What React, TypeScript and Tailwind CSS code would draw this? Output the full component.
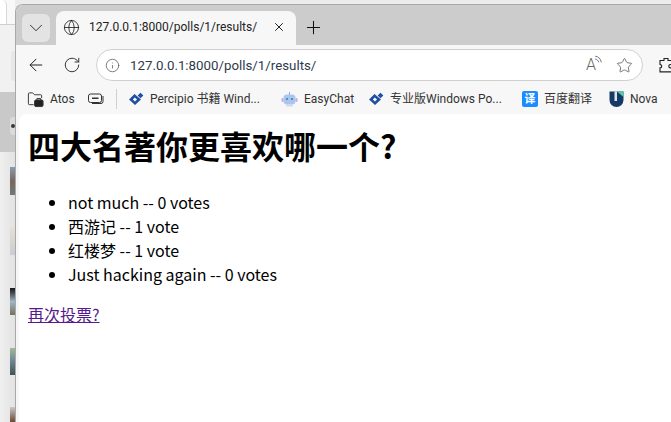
import { ChevronDown, X, Plus, ArrowLeft, RotateCw, Info, Star, Globe } from 'lucide-react';

function Bookmark({ icon, label, width }: { icon: React.ReactNode; label: string; width: string }) {
  return (
    <div className={`flex shrink-0 items-center gap-[6px] ${width}`}>
      {icon}
      <span className="whitespace-nowrap text-[12px] leading-[16px] text-[#333]">{label}</span>
    </div>
  );
}

function Diamond() {
  return (
    <svg width="16" height="16" viewBox="0 0 16 16" className="shrink-0">
      <path d="M6.5 3 L13 8.5 L7 14 L1 8.5 Z M6.8 6.5 L4.8 8.5 L7 10.5 L9 8.5 Z" fill="#1f4fa3" fillRule="evenodd" />
      <rect x="10.5" y="2.5" width="4" height="4" transform="rotate(45 12.5 4.5)" fill="#1f4fa3" />
    </svg>
  );
}

export default function App() {
  return (
    <div className='flex h-[422px] w-[671px] overflow-hidden bg-[#ececec] font-["Roboto","Noto_Sans_CJK_SC",sans-serif]'>
      {/* desktop behind the window */}
      <div className="flex w-[15px] shrink-0 flex-col">
        <div className="h-[25px] shrink-0 border-b border-[#cfcfcf] bg-[#f8f8f8]">
          <div className="h-[24px] w-[7px] rounded-tr-[5px] border-r border-[#d8d8d8] bg-white" />
        </div>
        <div className="h-[67px] shrink-0 bg-[#f1f1f1] pt-[26px] pl-[11px]">
          <div className="h-[30px] w-[4px] rounded-l-[3px] bg-[#e7e7e7]" />
        </div>
        <div className="h-[60px] shrink-0 bg-[#c9c9c9] pt-[25px] pl-[10px]">
          <div className="flex h-[18px] w-[5px] items-center justify-end rounded-l-[3px] bg-[#dadada]">
            <div className="h-[4px] w-[4px] rounded-full bg-[#3e3542]" />
          </div>
        </div>
        <div className="flex-1 bg-gradient-to-r from-[#f0f0f0] to-[#e2e2e2] pl-[10px]">
          <div className="mt-[15px] h-[28px] w-[5px] bg-gradient-to-b from-[#8a9bb0] via-[#77685c] to-[#6d7a78]" />
          <div className="mt-[32px] h-[28px] w-[5px] bg-gradient-to-b from-[#e8dfd5] to-[#c9ccd2]" />
          <div className="mt-[33px] h-[27px] w-[5px] bg-gradient-to-b from-[#15151c] via-[#9fb8c6] to-[#77705a]" />
          <div className="mt-[33px] h-[27px] w-[5px] bg-gradient-to-b from-[#a3b894] via-[#6c8493] to-[#3e5650]" />
          <div className="mt-[32px] h-[15px] w-[5px] bg-gradient-to-b from-[#c9c9c9] to-[#6b4a35]" />
        </div>
      </div>

      {/* browser window */}
      <div className="mt-[4px] flex min-w-0 flex-1 flex-col overflow-hidden rounded-tl-[8px] border-t border-l border-[#a8a8a8] bg-[#f7f7f7]">
        {/* tab strip */}
        <div className="flex h-[40px] shrink-0 items-end bg-[#cccccc] pl-[6px]">
          <div className="mb-[3px] flex h-[28px] w-[28px] items-center justify-center rounded-[6px] bg-[#e3e3e3]">
            <ChevronDown size={22} strokeWidth={1} className="text-[#222]" />
          </div>
          <div className="ml-[6px] flex h-[34px] w-[240px] items-center rounded-t-[8px] bg-[#f7f7f7] pr-[10px] pb-[2px] pl-[7px]">
            <Globe size={17} strokeWidth={1.1} className="shrink-0 text-[#111]" />
            <span className="ml-[9px] flex-1 whitespace-nowrap text-[12px] text-[#222]">127.0.0.1:8000/polls/1/results/</span>
            <X size={14} strokeWidth={1.6} className="text-[#111]" />
          </div>
          <div className="ml-[7px] flex h-[34px] items-center pb-[2px]">
            <Plus size={21} strokeWidth={1.2} className="text-[#111]" />
          </div>
        </div>

        {/* toolbar */}
        <div className="flex h-[40px] shrink-0 items-center pl-[10px]">
          <ArrowLeft size={20} strokeWidth={1.2} className="shrink-0 text-[#222]" />
          <RotateCw size={18} strokeWidth={1.2} className="ml-[17px] shrink-0 text-[#222]" />
          <div className="ml-[15px] flex h-[32px] w-[547px] shrink-0 items-center rounded-full border border-[#d0d0d0] bg-white pr-[9px] pl-[8px]">
            <Info size={15} strokeWidth={1.2} className="shrink-0 text-[#555]" />
            <span className="ml-[10px] flex-1 whitespace-nowrap pt-[1px] text-[13.3px] text-[#2e3a4d]">127.0.0.1:8000/polls/1/results/</span>
            <span className="relative mr-[20px] text-[16px] leading-none font-light text-[#666]">
              A
              <svg width="9" height="9" viewBox="0 0 8 8" className="absolute -top-[2px] -right-[7px]" fill="none" stroke="#666" strokeWidth="0.8">
                <path d="M1 1 C4 1.5 6 3.5 6.5 6.5" />
                <path d="M1 3.5 C2.5 3.8 3.8 5 4.2 6.5" />
              </svg>
            </span>
            <Star size={17} strokeWidth={1.1} className="shrink-0 text-[#555]" />
          </div>
          <svg width="18" height="18" viewBox="0 0 18 18" className="ml-[14px] shrink-0" fill="none" stroke="#222" strokeWidth="1.1">
            <path d="M7 2.5 h4 v2 h4 v4 h-1.5 a1.7 1.7 0 0 0 0 3.4 H15 v4 H3 v-4 a1.7 1.7 0 0 0 0 -3.4 V4.5 h4 Z" />
          </svg>
        </div>

        {/* bookmarks bar */}
        <div className="flex h-[29px] shrink-0 items-center pb-[1px] pl-[11px]">
          <Bookmark
            width="w-[61px]"
            label="Atos"
            icon={
              <svg width="17" height="18" viewBox="0 0 18 18" className="shrink-0" fill="none" stroke="#333" strokeWidth="1">
                <path d="M7 15 H2.5 a1 1 0 0 1 -1 -1 V3.5 a1 1 0 0 1 1 -1 H6 l2 2 h6.5 a1 1 0 0 1 1 1 V8" />
                <rect x="8" y="10" width="9" height="7" rx="1.5" fill="#222" />
                <path d="M10.5 10 V8.5 h4 V10" />
              </svg>
            }
          />
          <svg width="16" height="12" viewBox="0 0 16 12" className="shrink-0" fill="none" stroke="#333" strokeWidth="1">
            <rect x="0.5" y="1" width="13" height="8.5" rx="2" />
            <path d="M4 5.2 H10.5" strokeWidth="1.4" />
            <path d="M15 3 V8.5 a2 2 0 0 1 -2 2 H4" />
          </svg>
          <div className="mr-[11px] ml-[12px] h-[20px] w-px shrink-0 bg-[#cfcfcf]" />
          <Bookmark width="w-[153px]" label="Percipio 书籍 Wind..." icon={<Diamond />} />
          <Bookmark
            width="w-[87px]"
            label="EasyChat"
            icon={
              <svg width="17" height="17" viewBox="0 0 17 17" className="shrink-0">
                <rect x="8" y="1" width="1" height="3" fill="#8fa8d8" />
                <rect x="2.5" y="3.5" width="12" height="10" rx="3.5" fill="#a9c6ef" />
                <rect x="0.5" y="7" width="2" height="4" rx="1" fill="#c3a9e6" />
                <rect x="14.5" y="7" width="2" height="4" rx="1" fill="#c3a9e6" />
                <circle cx="6" cy="8" r="1" fill="#4e6fa8" />
                <circle cx="11" cy="8" r="1" fill="#4e6fa8" />
                <rect x="5" y="13" width="7" height="2.5" rx="1" fill="#cdd9ee" />
              </svg>
            }
          />
          <Bookmark width="w-[154px]" label="专业版Windows Po..." icon={<Diamond />} />
          <Bookmark
            width="w-[87px]"
            label="百度翻译"
            icon={
              <span className="flex h-[16px] w-[16px] shrink-0 items-center justify-center rounded-[2px] bg-[#1a8cff] text-[11px] leading-none font-bold text-white">
                译
              </span>
            }
          />
          <Bookmark
            width="w-[60px]"
            label="Nova"
            icon={
              <svg width="15" height="16" viewBox="0 0 15 16" className="shrink-0">
                <path d="M0.5 0.5 H14.5 V9 a7 7 0 0 1 -14 0 Z" fill="#163a66" />
                <path d="M8 0.5 H14.5 V6 Z" fill="#5fc8a8" />
                <path d="M5.5 0.5 H8 V10 H5.5 Z" fill="#f7f7f7" opacity="0.9" />
              </svg>
            }
          />
        </div>

        {/* page */}
        <div className='ml-[3px] flex-1 rounded-tl-[8px] bg-white pt-[8px] pl-[9px] font-["Noto_Sans_CJK_SC",sans-serif] text-black'>
          <h1 className="text-[32px] leading-[46px] font-bold whitespace-nowrap">四大名著你更喜欢哪一个?</h1>
          <ul className="mt-[22px] list-disc pl-[40px] text-[16px] leading-[24px]">
            <li>not much -- 0 votes</li>
            <li>西游记 -- 1 vote</li>
            <li>红楼梦 -- 1 vote</li>
            <li>Just hacking again -- 0 votes</li>
          </ul>
          <a href="#" className="mt-[16px] block w-fit text-[16px] leading-[24px] text-[#551a8b] underline">
            再次投票?
          </a>
        </div>
      </div>
    </div>
  );
}
